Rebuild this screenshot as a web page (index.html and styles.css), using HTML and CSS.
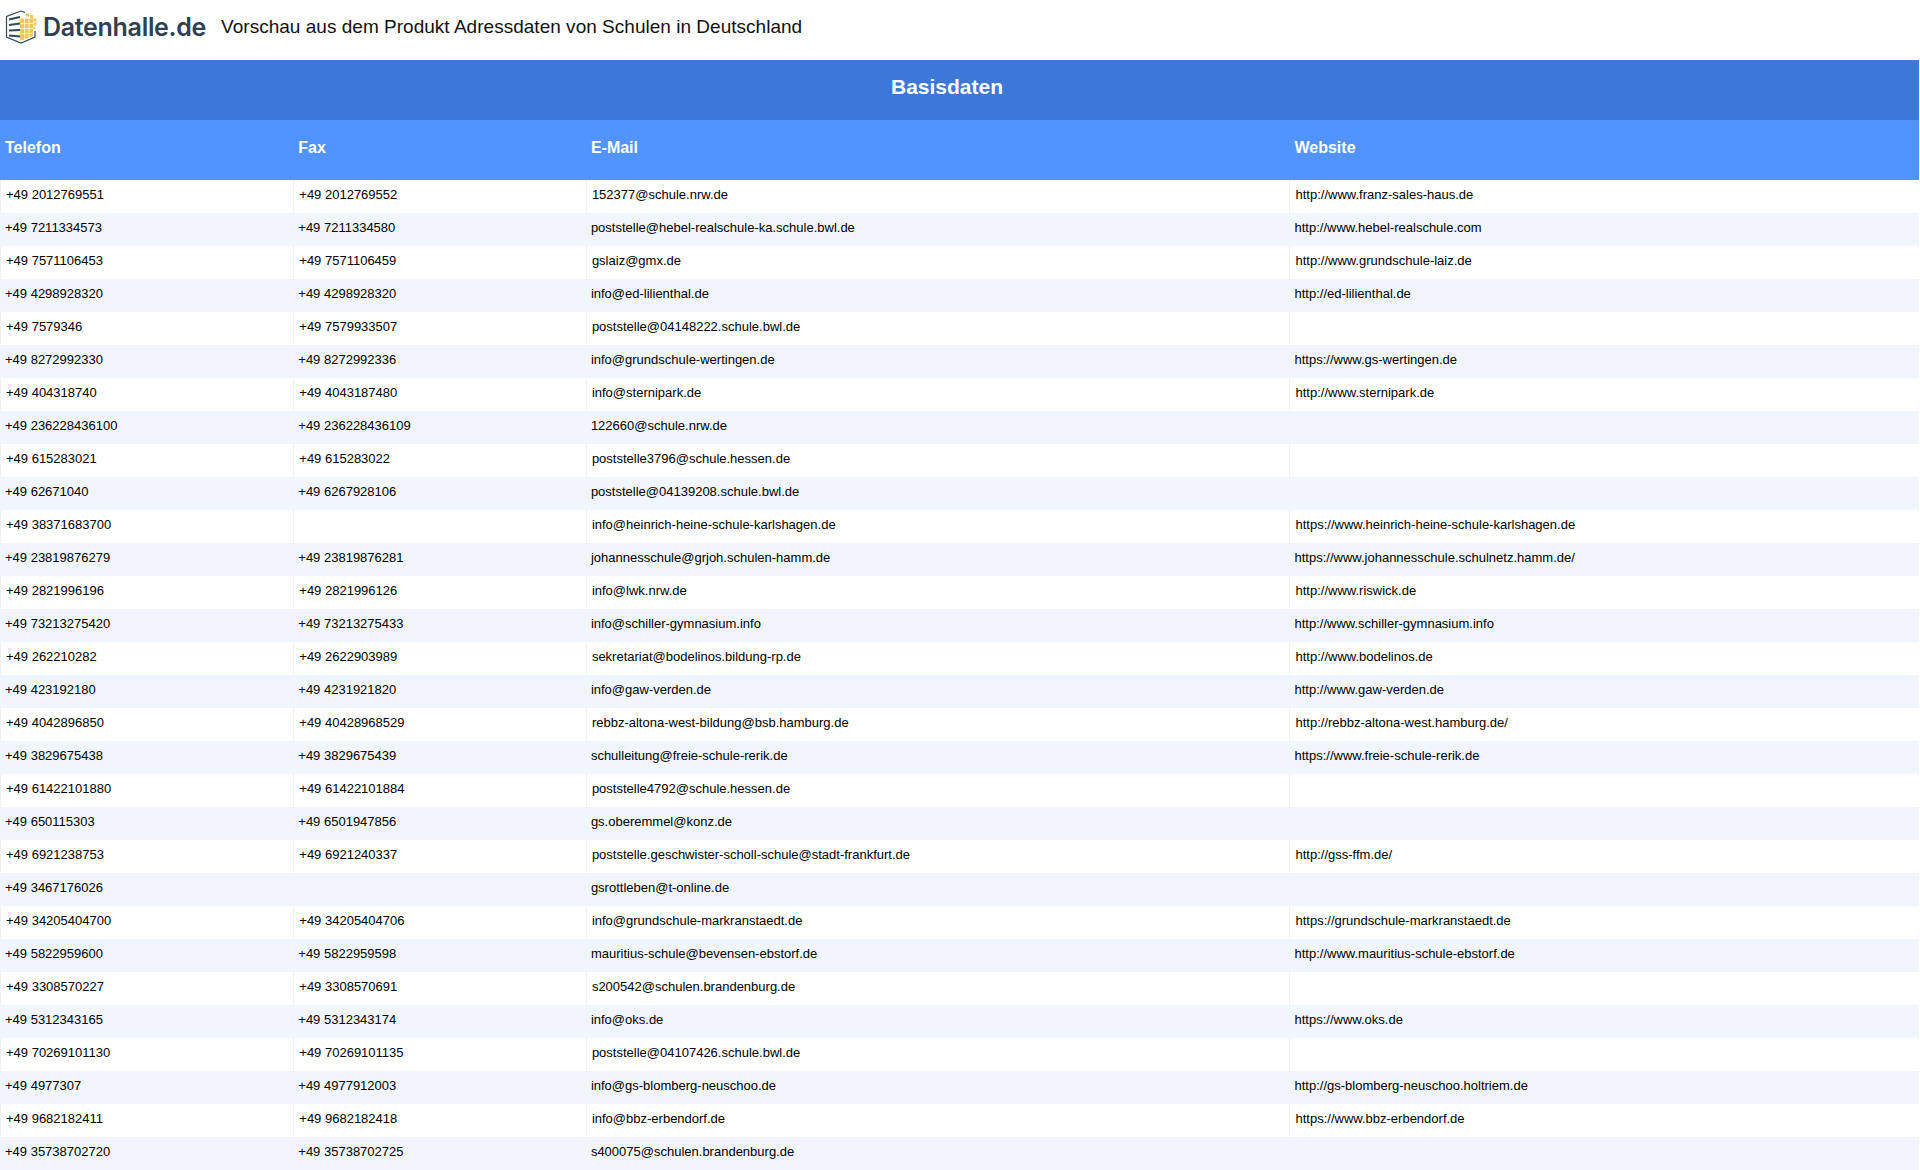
FILE: index.html
```html
<!DOCTYPE html>
<html lang="de">
<head>
<meta charset="utf-8">
<title>Vorschau Adressdaten von Schulen in Deutschland</title>
<link rel="stylesheet" href="styles.css">
</head>
<body>
<header class="topbar">
  <div class="logo">
    <svg class="logo-mark" viewBox="0 0 32 34" width="32" height="34" aria-hidden="true">
      <path d="M16 1 1.500 6.500v20.500l14.500 6 14-6V21" fill="none" stroke="#33475b" stroke-width="1.200"/>
      <path d="M16 1 20 2.500" fill="none" stroke="#33475b" stroke-width="1.200"/>
      <path d="M4 9.500 15 7M4 15 15 13.500M4 20.500 15 20M4 25.500 15 26.500" fill="none" stroke="#33475b" stroke-width="2"/>
      <path d="M15 8.500h13v17.500l-13 5z" fill="#f9c25d"/>
      <path d="M15 13.500h13M15 18.500h13M15 23.500h13M19.500 8.500v22M24 8.500v20" stroke="#fff" stroke-width=".7"/>
      <path d="M21 3.500h3v3h-3zM25 5h3v3h-3zM28.500 8.500h3v3h-3zM28.500 12.500h3v3h-3zM28.500 17h2v2h-2z" fill="#f9c25d"/>
    </svg>
    <span class="logo-text">Datenhalle.de</span>
  </div>
  <h1 class="page-title">Vorschau aus dem Produkt Adressdaten von Schulen in Deutschland</h1>
</header>
<main class="table">
  <div class="band">Basisdaten</div>
  <div class="row head"><div class="cell">Telefon</div><div class="cell">Fax</div><div class="cell">E-Mail</div><div class="cell">Website</div></div>
  <div class="row"><div class="cell">+49 2012769551</div><div class="cell">+49 2012769552</div><div class="cell">152377@schule.nrw.de</div><div class="cell">http://www.franz-sales-haus.de</div></div>
  <div class="row"><div class="cell">+49 7211334573</div><div class="cell">+49 7211334580</div><div class="cell">poststelle@hebel-realschule-ka.schule.bwl.de</div><div class="cell">http://www.hebel-realschule.com</div></div>
  <div class="row"><div class="cell">+49 7571106453</div><div class="cell">+49 7571106459</div><div class="cell">gslaiz@gmx.de</div><div class="cell">http://www.grundschule-laiz.de</div></div>
  <div class="row"><div class="cell">+49 4298928320</div><div class="cell">+49 4298928320</div><div class="cell">info@ed-lilienthal.de</div><div class="cell">http://ed-lilienthal.de</div></div>
  <div class="row"><div class="cell">+49 7579346</div><div class="cell">+49 7579933507</div><div class="cell">poststelle@04148222.schule.bwl.de</div><div class="cell"></div></div>
  <div class="row"><div class="cell">+49 8272992330</div><div class="cell">+49 8272992336</div><div class="cell">info@grundschule-wertingen.de</div><div class="cell">https://www.gs-wertingen.de</div></div>
  <div class="row"><div class="cell">+49 404318740</div><div class="cell">+49 4043187480</div><div class="cell">info@sternipark.de</div><div class="cell">http://www.sternipark.de</div></div>
  <div class="row"><div class="cell">+49 236228436100</div><div class="cell">+49 236228436109</div><div class="cell">122660@schule.nrw.de</div><div class="cell"></div></div>
  <div class="row"><div class="cell">+49 615283021</div><div class="cell">+49 615283022</div><div class="cell">poststelle3796@schule.hessen.de</div><div class="cell"></div></div>
  <div class="row"><div class="cell">+49 62671040</div><div class="cell">+49 6267928106</div><div class="cell">poststelle@04139208.schule.bwl.de</div><div class="cell"></div></div>
  <div class="row"><div class="cell">+49 38371683700</div><div class="cell"></div><div class="cell">info@heinrich-heine-schule-karlshagen.de</div><div class="cell">https://www.heinrich-heine-schule-karlshagen.de</div></div>
  <div class="row"><div class="cell">+49 23819876279</div><div class="cell">+49 23819876281</div><div class="cell">johannesschule@grjoh.schulen-hamm.de</div><div class="cell">https://www.johannesschule.schulnetz.hamm.de/</div></div>
  <div class="row"><div class="cell">+49 2821996196</div><div class="cell">+49 2821996126</div><div class="cell">info@lwk.nrw.de</div><div class="cell">http://www.riswick.de</div></div>
  <div class="row"><div class="cell">+49 73213275420</div><div class="cell">+49 73213275433</div><div class="cell">info@schiller-gymnasium.info</div><div class="cell">http://www.schiller-gymnasium.info</div></div>
  <div class="row"><div class="cell">+49 262210282</div><div class="cell">+49 2622903989</div><div class="cell">sekretariat@bodelinos.bildung-rp.de</div><div class="cell">http://www.bodelinos.de</div></div>
  <div class="row"><div class="cell">+49 423192180</div><div class="cell">+49 4231921820</div><div class="cell">info@gaw-verden.de</div><div class="cell">http://www.gaw-verden.de</div></div>
  <div class="row"><div class="cell">+49 4042896850</div><div class="cell">+49 40428968529</div><div class="cell">rebbz-altona-west-bildung@bsb.hamburg.de</div><div class="cell">http://rebbz-altona-west.hamburg.de/</div></div>
  <div class="row"><div class="cell">+49 3829675438</div><div class="cell">+49 3829675439</div><div class="cell">schulleitung@freie-schule-rerik.de</div><div class="cell">https://www.freie-schule-rerik.de</div></div>
  <div class="row"><div class="cell">+49 61422101880</div><div class="cell">+49 61422101884</div><div class="cell">poststelle4792@schule.hessen.de</div><div class="cell"></div></div>
  <div class="row"><div class="cell">+49 650115303</div><div class="cell">+49 6501947856</div><div class="cell">gs.oberemmel@konz.de</div><div class="cell"></div></div>
  <div class="row"><div class="cell">+49 6921238753</div><div class="cell">+49 6921240337</div><div class="cell">poststelle.geschwister-scholl-schule@stadt-frankfurt.de</div><div class="cell">http://gss-ffm.de/</div></div>
  <div class="row"><div class="cell">+49 3467176026</div><div class="cell"></div><div class="cell">gsrottleben@t-online.de</div><div class="cell"></div></div>
  <div class="row"><div class="cell">+49 34205404700</div><div class="cell">+49 34205404706</div><div class="cell">info@grundschule-markranstaedt.de</div><div class="cell">https://grundschule-markranstaedt.de</div></div>
  <div class="row"><div class="cell">+49 5822959600</div><div class="cell">+49 5822959598</div><div class="cell">mauritius-schule@bevensen-ebstorf.de</div><div class="cell">http://www.mauritius-schule-ebstorf.de</div></div>
  <div class="row"><div class="cell">+49 3308570227</div><div class="cell">+49 3308570691</div><div class="cell">s200542@schulen.brandenburg.de</div><div class="cell"></div></div>
  <div class="row"><div class="cell">+49 5312343165</div><div class="cell">+49 5312343174</div><div class="cell">info@oks.de</div><div class="cell">https://www.oks.de</div></div>
  <div class="row"><div class="cell">+49 70269101130</div><div class="cell">+49 70269101135</div><div class="cell">poststelle@04107426.schule.bwl.de</div><div class="cell"></div></div>
  <div class="row"><div class="cell">+49 4977307</div><div class="cell">+49 4977912003</div><div class="cell">info@gs-blomberg-neuschoo.de</div><div class="cell">http://gs-blomberg-neuschoo.holtriem.de</div></div>
  <div class="row"><div class="cell">+49 9682182411</div><div class="cell">+49 9682182418</div><div class="cell">info@bbz-erbendorf.de</div><div class="cell">https://www.bbz-erbendorf.de</div></div>
  <div class="row"><div class="cell">+49 35738702720</div><div class="cell">+49 35738702725</div><div class="cell">s400075@schulen.brandenburg.de</div><div class="cell"></div></div>
</main>
</body>
</html>
```
FILE: styles.css
```css
html, body { margin: 0; padding: 0; background: #fff; overflow: hidden; height: 1170px; }
body { font-family: "Liberation Sans", Arial, sans-serif; color: #000; width: 1919px; }
.topbar { display: flex; align-items: center; height: 60px; padding-bottom: 6px; box-sizing: border-box; padding-left: 5px; }
.logo { display: flex; align-items: center; }
.logo-mark { display: block; flex: none; }
.logo-text { font-family: Inter, sans-serif; font-weight: 600; font-size: 25px; letter-spacing: -0.3px; color: #2e4053; margin-left: 6px; }
.page-title { margin: 0 0 0 15px; font-size: 19px; font-weight: 400; color: #111; letter-spacing: .02px; }
.band { height: 60px; background: #3b78d8; color: #fff; font-size: 21px; font-weight: 700; display: flex; align-items: center; justify-content: center; padding: 0 25px 6px 0; box-sizing: border-box; }
.row { display: grid; grid-template-columns: 293.3px 292.6px 703.6px 1fr; height: 33px; font-size: 13px; }
.cell { padding: 0 5px 4px; display: flex; align-items: center; box-sizing: border-box; white-space: nowrap; }
.row:nth-child(even) { background: #f1f6fe; }
.row:nth-child(odd) .cell { border-left: 1px solid #f1f1f1; }
.row.head { background: #5294ff; color: #fff; font-size: 16px; font-weight: 700; height: 60px; }
.row.head .cell { padding-bottom: 4px; }
```
